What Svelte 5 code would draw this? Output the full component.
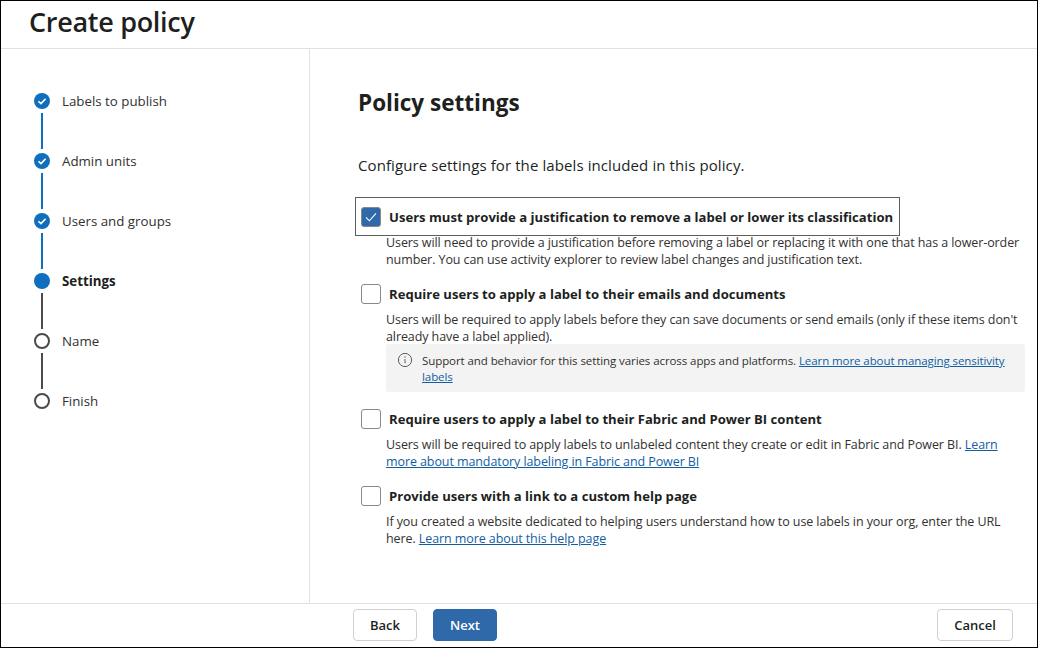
<script>
  const steps = [
    { name: "Labels to publish", state: "done" },
    { name: "Admin units", state: "done" },
    { name: "Users and groups", state: "done" },
    { name: "Settings", state: "current" },
    { name: "Name", state: "todo" },
    { name: "Finish", state: "todo" }
  ];
</script>

<div class="page">
  <header class="top">
    <h1>Create policy</h1>
  </header>

  <div class="body">
    <nav class="steps">
      {#each steps as step, i}
        <div class="step">
          <div class="marker">
            <span class="dot {step.state}">
              {#if step.state === "done"}
                <svg width="10" height="10" viewBox="0 0 10 10"><path d="M1.5 5.3 L4 7.6 L8.6 2.8" fill="none" stroke="#fff" stroke-width="1.6" /></svg>
              {/if}
            </span>
            {#if i < steps.length - 1}
              <span class="line" class:blue={step.state === "done"}></span>
            {/if}
          </div>
          <span class="step-name" class:bold={step.state === "current"}>{step.name}</span>
        </div>
      {/each}
    </nav>

    <main class="main">
      <h2>Policy settings</h2>
      <p class="intro">Configure settings for the labels included in this policy.</p>

      <div class="option first">
        <div class="focus-box">
          <span class="check on">
            <svg width="14" height="14" viewBox="0 0 14 14"><path d="M2 7.4 L5.4 10.8 L12 3.4" fill="none" stroke="#fff" stroke-width="1.1" /></svg>
          </span>
          <span class="label">Users must provide a justification to remove a label or lower its classification</span>
        </div>
        <p class="desc tight">Users will need to provide a justification before removing a label or replacing it with one that has a lower-order number. You can use activity explorer to review label changes and justification text.</p>
      </div>

      <div class="option">
        <div class="head">
          <span class="check"></span>
          <span class="label">Require users to apply a label to their emails and documents</span>
        </div>
        <p class="desc">Users will be required to apply labels before they can save documents or send emails (only if these items don't already have a label applied).</p>
        <div class="info">
          <svg class="info-icon" width="16" height="16" viewBox="0 0 16 16">
            <circle cx="8" cy="8" r="6.6" fill="none" stroke="#605e5c" stroke-width="1" />
            <path d="M8 7 V11.2" stroke="#605e5c" stroke-width="1" />
            <circle cx="8" cy="5" r="0.7" fill="#605e5c" />
          </svg>
          <p>Support and behavior for this setting varies across apps and platforms. <a href="#a">Learn more about managing sensitivity labels</a></p>
        </div>
      </div>

      <div class="option after-info">
        <div class="head">
          <span class="check"></span>
          <span class="label">Require users to apply a label to their Fabric and Power BI content</span>
        </div>
        <p class="desc">Users will be required to apply labels to unlabeled content they create or edit in Fabric and Power BI. <a href="#b">Learn more about mandatory labeling in Fabric and Power BI</a></p>
      </div>

      <div class="option">
        <div class="head">
          <span class="check"></span>
          <span class="label">Provide users with a link to a custom help page</span>
        </div>
        <p class="desc">If you created a website dedicated to helping users understand how to use labels in your org, enter the URL here. <a href="#c">Learn more about this help page</a></p>
      </div>
    </main>
  </div>

  <footer class="bottom">
    <button class="btn back">Back</button>
    <button class="btn next">Next</button>
    <button class="btn cancel">Cancel</button>
  </footer>
</div>

<style>
  :global(body) {
    margin: 0;
    background: #fff;
  }

  .page {
    box-sizing: border-box;
    width: 1038px;
    height: 648px;
    border: 1px solid #000;
    display: flex;
    flex-direction: column;
    font-family: "Open Sans", "Noto Sans", sans-serif;
    color: #201f1e;
    background: #fff;
    overflow: hidden;
  }

  /* Header */
  .top {
    height: 47px;
    flex: none;
    border-bottom: 1px solid #e1e1e1;
    padding-left: 28px;
  }
  h1 {
    margin: 0;
    font-size: 27px;
    line-height: 41px;
    font-weight: 600;
    letter-spacing: -0.3px;
  }

  .body {
    flex: 1;
    display: flex;
    min-height: 0;
  }

  /* Steps */
  .steps {
    width: 309px;
    flex: none;
    box-sizing: border-box;
    border-right: 1px solid #e1e1e1;
    padding: 44px 0 0 33px;
  }
  .step {
    display: flex;
    height: 60px;
  }
  .marker {
    width: 16px;
    display: flex;
    flex-direction: column;
    align-items: center;
  }
  .dot {
    box-sizing: border-box;
    width: 16px;
    height: 16px;
    flex: none;
    border-radius: 50%;
    display: flex;
    align-items: center;
    justify-content: center;
  }
  .dot.done,
  .dot.current {
    background: #106ebe;
  }
  .dot.todo {
    border: 2px solid #4a4a4a;
  }
  .line {
    width: 2px;
    height: 36px;
    margin-top: 4px;
    background: #4a4a4a;
  }
  .line.blue {
    background: #106ebe;
  }
  .step-name {
    margin-left: 12px;
    font-size: 13.3px;
    line-height: 16px;
    color: #323130;
  }
  .step-name.bold {
    font-weight: 700;
    color: #201f1e;
  }

  /* Main */
  .main {
    flex: 1;
    padding: 39px 12px 0 48px;
    min-width: 0;
  }
  h2 {
    margin: 0;
    font-size: 22.5px;
    line-height: 30px;
    font-weight: 700;
  }
  .intro {
    margin: 37px 0 0;
    font-size: 15px;
    line-height: 20px;
    letter-spacing: 0.1px;
  }

  .option {
    margin-top: 16px;
    padding-left: 3px;
  }
  .option.first {
    margin-top: 22px;
  }
  .option.after-info {
    margin-top: 17px;
  }
  .head {
    display: flex;
    align-items: center;
    height: 20px;
  }
  .focus-box {
    box-sizing: border-box;
    display: flex;
    align-items: center;
    width: 545px;
    height: 39px;
    margin-left: -6px;
    padding-left: 5px;
    border: 1px solid #605e5c;
  }
  .check {
    box-sizing: border-box;
    width: 20px;
    height: 20px;
    flex: none;
    border: 1px solid #8a8886;
    border-radius: 3px;
    display: flex;
    align-items: center;
    justify-content: center;
    background: #fff;
  }
  .check.on {
    background: #2f69aa;
  }
  .label {
    margin-left: 8px;
    font-size: 13.1px;
    line-height: 20px;
    font-weight: 700;
    white-space: nowrap;
  }
  .desc {
    margin: 7px 0 0 25px;
    font-size: 12.5px;
    line-height: 17px;
    letter-spacing: -0.09px;
    color: #323130;
  }
  .desc.tight {
    margin-top: -2px;
  }
  a {
    color: #115ea3;
    text-decoration: underline;
  }

  .info {
    display: flex;
    box-sizing: border-box;
    height: 48px;
    margin: -1px 0 0 25px;
    padding: 9px 12px 0 11px;
    background: #f3f3f3;
    border-radius: 3px;
    font-size: 11.5px;
    line-height: 16px;
    letter-spacing: -0.08px;
  }
  .info-icon {
    flex: none;
    margin: -1px 9px 0 0;
  }
  .info p {
    margin: 0;
    color: #323130;
  }

  /* Footer */
  .bottom {
    height: 44px;
    flex: none;
    border-top: 1px solid #e1e1e1;
    display: flex;
    align-items: flex-start;
    padding: 5px 24px 0 352px;
    box-sizing: border-box;
  }
  .btn {
    box-sizing: border-box;
    height: 32px;
    width: 64px;
    border: 1px solid #d2d0ce;
    border-radius: 4px;
    background: #fff;
    font-family: inherit;
    font-size: 13px;
    font-weight: 600;
    color: #201f1e;
    padding: 0;
  }
  .next {
    margin-left: 16px;
    background: #2f69aa;
    border-color: #2f69aa;
    color: #fff;
  }
  .cancel {
    margin-left: auto;
    width: 76px;
  }
</style>
